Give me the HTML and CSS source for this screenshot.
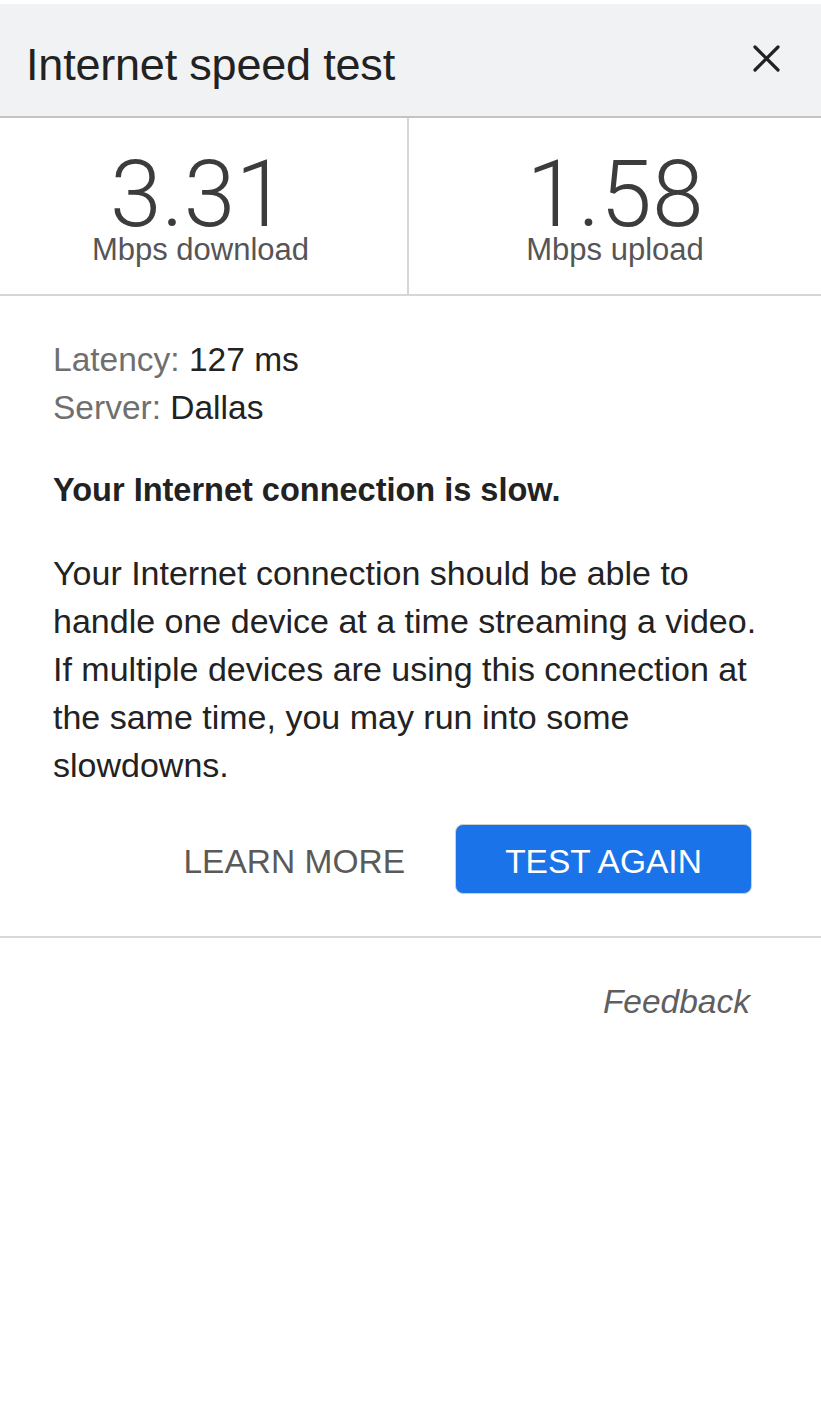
FILE: index.html
```html
<!DOCTYPE html>
<html lang="en">
<head>
<meta charset="utf-8">
<title>Internet speed test</title>
<link rel="stylesheet" href="styles.css">
</head>
<body>
<div class="panel">
  <header class="header">
    <h1 class="title">Internet speed test</h1>
    <button class="close" aria-label="Close">
      <svg width="27" height="27" viewBox="0 0 27 27"><path d="M2 2 L25 25 M25 2 L2 25" stroke="#222" stroke-width="3.2" stroke-linecap="round" fill="none"/></svg>
    </button>
  </header>
  <section class="stats">
    <div class="stat">
      <div class="value">3.31</div>
      <div class="unit">Mbps download</div>
    </div>
    <div class="stat">
      <div class="value">1.58</div>
      <div class="unit">Mbps upload</div>
    </div>
  </section>
  <section class="details">
    <div class="meta"><span class="key">Latency:</span> 127 ms</div>
    <div class="meta"><span class="key">Server:</span> Dallas</div>
    <h2 class="verdict">Your Internet connection is slow.</h2>
    <p class="desc">Your Internet connection should be able to handle one device at a time streaming a video. If multiple devices are using this connection at the same time, you may run into some slowdowns.</p>
    <div class="actions">
      <button class="btn-text">LEARN MORE</button>
      <button class="btn-primary">TEST AGAIN</button>
    </div>
  </section>
  <footer class="footer">
    <a class="feedback">Feedback</a>
  </footer>
</div>
</body>
</html>
```
FILE: styles.css
```css
* { box-sizing: border-box; }
html, body { margin: 0; padding: 0; background: #fff; }
body { font-family: "Liberation Sans", Arial, sans-serif; color: #202124; }
.panel { width: 821px; padding-top: 4px; }
.header {
  height: 114px;
  background: #f1f2f4;
  border-bottom: 2px solid #c3c3c3;
  display: flex;
  align-items: center;
  justify-content: space-between;
  padding: 0 41px 0 26px;
}
.title { margin: 0; font-size: 45px; font-weight: normal; color: #222; letter-spacing: -0.2px; padding-top: 10px; }
.close { background: none; border: 0; padding: 0; width: 27px; height: 27px; margin-top: -4px; display: flex; }
.stats {
  display: grid;
  grid-template-columns: 409px 1fr;
  height: 178px;
  border-bottom: 2px solid #d6d6d6;
}
.stat { display: flex; flex-direction: column; align-items: center; padding-top: 37px; }
.stat:first-child { border-right: 2px solid #d6d6d6; padding-right: 10px; }
.value { font-family: Roboto, "Liberation Sans", sans-serif; font-weight: 300; font-size: 93px; line-height: 80px; color: #3c3c3c; }
.unit { font-family: "Liberation Sans", Arial, sans-serif; font-size: 31px; line-height: 30px; color: #555; }
.stat:first-child .unit { margin-left: 4px; }
.details { padding: 40px 53px 0 53px; border-bottom: 2px solid #d8d8d8; }
.meta { font-size: 33.5px; line-height: 48px; color: #222; }
.key { color: #6f6f6f; }
.verdict { margin: 34px 0 0 0; font-size: 32.5px; line-height: 48px; font-weight: bold; color: #222; }
.desc { margin: 35px 0 0 0; font-size: 34px; line-height: 48px; color: #222; }
.actions { display: flex; justify-content: flex-end; align-items: center; gap: 50px; padding: 35px 16px 42px 0; }
.btn-text { background: none; border: 0; font-family: inherit; font-size: 33.5px; color: #5a5a5a; padding: 6px 0 0 0; }
.btn-primary {
  font-family: inherit;
  font-size: 33.5px;
  color: #fff;
  background: #1a73e8;
  border: 1px solid #d0d0d0;
  border-radius: 8px;
  width: 297px;
  height: 70px;
  padding: 6px 0 0 0;
}
.footer { display: flex; justify-content: flex-end; padding: 40px 71px 0 0; }
.feedback { font-style: italic; font-size: 33.5px; line-height: 48px; color: #5f5f5f; }
```
